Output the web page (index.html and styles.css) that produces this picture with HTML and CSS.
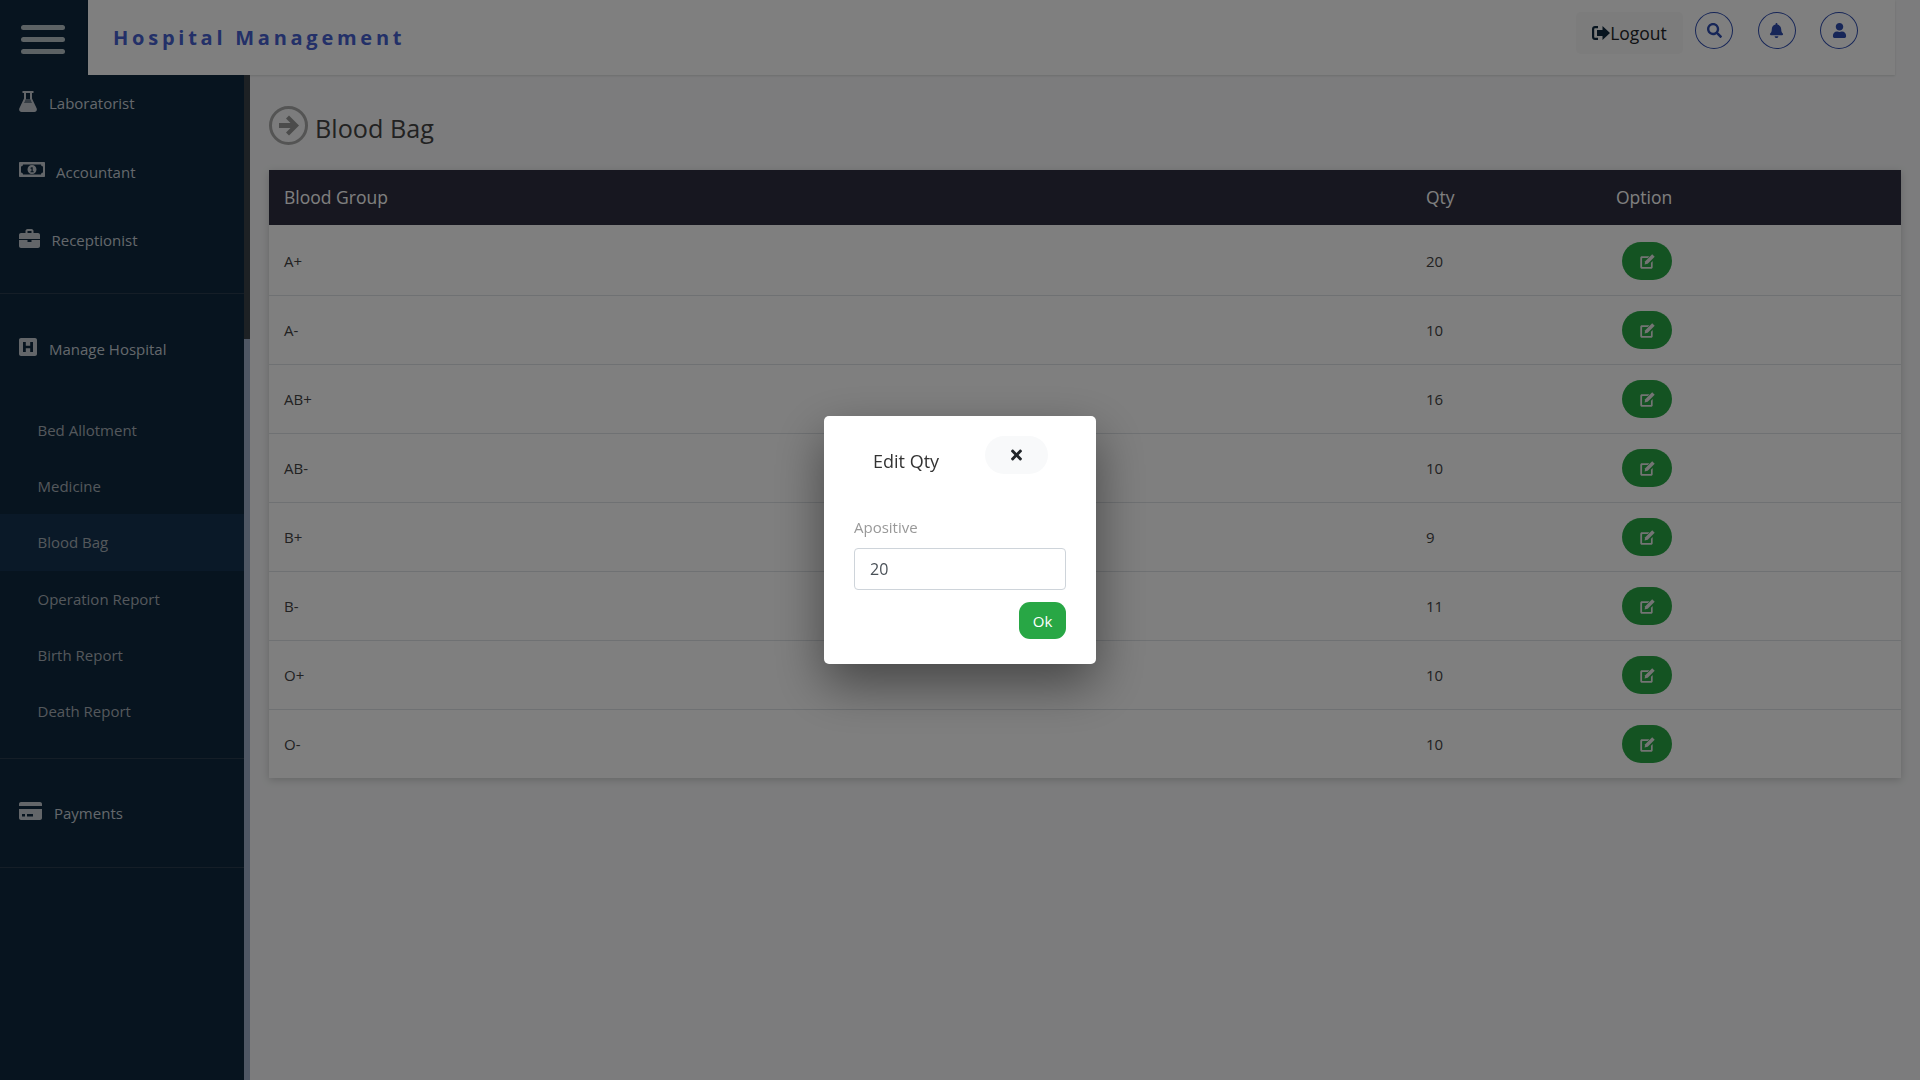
FILE: index.html
```html
<!DOCTYPE html>
<html lang="en">
<head>
    <meta charset="UTF-8">
    <title>Blood Bag</title>
    <link rel="stylesheet" href="styles.css">
</head>
<body>
<div class="topbar">
    <div class="logo-box">
        <span class="burger-line"></span>
        <span class="burger-line"></span>
        <span class="burger-line"></span>
    </div>
    <header class="header">
        <div class="brand">Hospital Management</div>
        <div class="header-tools">
            <button class="logout-btn">
                <svg class="logout-icon" viewBox="0 0 18 14"><path d="M6 0v2.200H3.200c-.6 0-1 .4-1 1v7.600c0 .6.4 1 1 1H6V14H3C1.300 14 0 12.700 0 11V3C0 1.300 1.300 0 3 0z"/><path d="M10.500 0 18 7l-7.500 7V10H5V4h5.500z"/></svg>Logout
            </button>
            <span class="round-btn"><svg class="tool-icon" viewBox="0 0 512 512"><path d="M505 442.700L405.300 343c-4.500-4.500-10.600-7-17-7H372c27.600-35.300 44-79.700 44-128C416 93.100 322.900 0 208 0S0 93.100 0 208s93.100 208 208 208c48.300 0 92.700-16.400 128-44v16.300c0 6.400 2.500 12.500 7 17l99.700 99.700c9.400 9.400 24.600 9.400 33.900 0l28.300-28.300c9.400-9.400 9.400-24.600.1-34zM208 336c-70.700 0-128-57.200-128-128 0-70.700 57.200-128 128-128 70.700 0 128 57.200 128 128 0 70.700-57.200 128-128 128z"/></svg></span>
            <span class="round-btn"><svg class="tool-icon" viewBox="0 0 448 512"><path d="M224 512c35.320 0 63.970-28.650 63.970-64H160.030c0 35.350 28.650 64 63.970 64zm215.390-149.710c-19.320-20.760-55.470-51.990-55.470-154.290 0-77.700-54.480-139.900-127.940-155.160V32c0-17.670-14.320-32-31.980-32s-31.980 14.330-31.980 32v20.840C118.560 68.100 64.080 130.300 64.080 208c0 102.300-36.150 133.530-55.470 154.290-6 6.450-8.660 14.160-8.610 21.710.11 16.400 12.980 32 32.100 32h383.800c19.120 0 32-15.600 32.100-32 .05-7.550-2.610-15.270-8.610-21.710z"/></svg></span>
            <span class="round-btn"><svg class="tool-icon" viewBox="0 0 448 512"><path d="M224 256c70.700 0 128-57.300 128-128S294.700 0 224 0 96 57.300 96 128s57.300 128 128 128zm89.600 32h-16.700c-22.200 10.200-46.900 16-72.900 16s-50.600-5.800-72.900-16h-16.700C60.200 288 0 348.200 0 422.400V464c0 26.500 21.500 48 48 48h352c26.500 0 48-21.500 48-48v-41.600c0-74.200-60.200-134.400-134.400-134.400z"/></svg></span>
        </div>
    </header>
</div>

<div class="below">
    <aside class="sidebar">
        <nav class="side-nav">
            <a class="side-link first">
                <svg class="side-icon flask" viewBox="0 0 18 21"><path fill-rule="evenodd" d="M3.500 0h11v2H13v5.500l4.600 9.800c.8 1.700-.3 3.700-2.200 3.700H2.600C.7 21-.4 19 .4 17.300L5 7.500V2H3.500zM7 2v6l-1.800 4h7.600L11 8V2z"/><path d="M5.200 12h7.600l-2-4H7z" opacity="0.5"/></svg>
                <span class="side-text">Laboratorist</span>
            </a>
            <a class="side-link second">
                <svg class="side-icon money" viewBox="0 0 26 15"><path fill-rule="evenodd" d="M1 0h24c.6 0 1 .4 1 1v13c0 .6-.4 1-1 1H1c-.6 0-1-.4-1-1V1c0-.6.4-1 1-1zm3 2.500C4 3.600 3.100 4.500 2 4.500v6c1.100 0 2 .9 2 2h18c0-1.100.9-2 2-2v-6c-1.100 0-2-.9-2-2z"/><path fill-rule="evenodd" d="M13 3c2.500 0 4.500 2 4.500 4.500S15.500 12 13 12s-4.500-2-4.500-4.500S10.500 3 13 3zm-1.500 2.800v1h1v2.400h-1v1h3.200v-1h-1V5.300h-1z"/></svg>
                <span class="side-text">Accountant</span>
            </a>
            <a class="side-link">
                <svg class="side-icon case" viewBox="0 0 21 19"><path fill-rule="evenodd" d="M6.500 4V2c0-1 .8-2 2-2h4c1.200 0 2 1 2 2v2H19c1.100 0 2 .9 2 2v4H0V6c0-1.100.9-2 2-2zm2-2v2h4V2z"/><path d="M0 11h8.500v2h4v-2H21v6c0 1.100-.9 2-2 2H2c-1.100 0-2-.9-2-2z"/></svg>
                <span class="side-text">Receptionist</span>
            </a>
            <div class="side-rule rule-one"></div>
            <a class="side-link parent">
                <svg class="side-icon hsquare" viewBox="0 0 18 18"><path fill-rule="evenodd" d="M2 0h14c1.100 0 2 .9 2 2v14c0 1.100-.9 2-2 2H2c-1.100 0-2-.9-2-2V2C0 .9.900 0 2 0zm2 4v10h2.800v-3.800h4.400V14H14V4h-2.800v3.800H6.800V4z"/></svg>
                <span class="side-text">Manage Hospital</span>
            </a>
            <ul class="sub-menu">
                <li class="sub-item">Bed Allotment</li>
                <li class="sub-item">Medicine</li>
                <li class="sub-item active">Blood Bag</li>
                <li class="sub-item">Operation Report</li>
                <li class="sub-item">Birth Report</li>
                <li class="sub-item">Death Report</li>
            </ul>
            <div class="side-rule rule-two"></div>
            <a class="side-link pay">
                <svg class="side-icon card" viewBox="0 0 23 18"><path fill-rule="evenodd" d="M2 0h19c1.100 0 2 .9 2 2v2H0V2C0 .9.900 0 2 0zM0 7h23v9c0 1.100-.9 2-2 2H2c-1.100 0-2-.9-2-2zm3 5v2.500h3V12zm5 0v2.500h6V12z"/></svg>
                <span class="side-text">Payments</span>
            </a>
            <div class="side-rule rule-three"></div>
        </nav>
        <div class="side-scroll">
            <div class="side-thumb"></div>
        </div>
    </aside>

    <main class="content">
        <div class="page-title">
            <svg class="title-icon" viewBox="0 0 39 39"><circle cx="19.500" cy="19.500" r="18" fill="none" stroke="currentColor" stroke-width="3"/><path d="M20 9.500l10 10-10 10-3-3 4.500-4.500H10v-5h11.500L17 12.500z"/></svg>
            <h1>Blood Bag</h1>
        </div>

        <table class="blood-table">
            <thead>
                <tr><th class="col-group">Blood Group</th><th class="col-qty">Qty</th><th>Option</th></tr>
            </thead>
            <tbody id="rows"></tbody>
        </table>
    </main>
</div>

<div class="backdrop">
    <div class="modal-box">
        <div class="modal-head">
            <span class="modal-title">Edit Qty</span>
            <button class="close-btn"><svg class="close-icon" viewBox="0 0 352 512"><path d="M242.720 256l100.070-100.070c12.280-12.280 12.280-32.190 0-44.480l-22.240-22.240c-12.280-12.280-32.190-12.280-44.480 0L176 189.280 75.930 89.210c-12.280-12.280-32.190-12.280-44.480 0L9.210 111.450c-12.280 12.280-12.280 32.190 0 44.480L109.280 256 9.210 356.070c-12.280 12.280-12.280 32.190 0 44.480l22.240 22.240c12.280 12.280 32.200 12.280 44.480 0L176 322.720l100.070 100.070c12.280 12.280 32.200 12.280 44.480 0l22.240-22.240c12.280-12.280 12.280-32.190 0-44.480L242.720 256z"/></svg></button>
        </div>
        <label class="field-label" for="qty">Apositive</label>
        <input class="field-input" id="qty" type="text" value="20">
        <div class="modal-foot"><button class="ok-btn">Ok</button></div>
    </div>
</div>

<script>
    const bloodData=[["A+",20],["A-",10],["AB+",16],["AB-",10],["B+",9],["B-",11],["O+",10],["O-",10]];
    const rowsE1=document.getElementById('rows');
    bloodData.forEach(item=>{
        const tr=document.createElement('tr');
        tr.innerHTML=`<td>${item[0]}</td><td>${item[1]}</td>
        <td><button class="edit-btn"><svg class="edit-icon" viewBox="0 0 16 16"><path d="M2 2.500h8l-1.800 1.800H2.800c-.3 0-.6.300-.6.600v8.300c0 .3.300.6.600.6h8.300c.3 0 .6-.3.6-.6V9.300l1.800-1.800V14c0 1-.8 1.600-1.600 1.600H2c-1 0-1.700-.7-1.700-1.600V4.200C.3 3.200 1 2.500 2 2.500z"/><path d="M13 .3l2.700 2.700-7.500 7.500-3.300.6.600-3.300z"/></svg></button></td>`;
        rowsE1.appendChild(tr);
    });
</script>
</body>
</html>
```
FILE: styles.css
```css
*{
    box-sizing: border-box;
    margin: 0;
    padding: 0;
}
body{
    font-family: "Open Sans", sans-serif;
    background: #f8f9fa;
    color: #444;
    height: 100vh;
    overflow: hidden;
}

/* top bar */
.topbar{
    display: flex;
    height: 75px;
}
.logo-box{
    width: 88px;
    padding: 3px 2px 0 0;
    background: #0e283e;
    display: flex;
    flex-direction: column;
    align-items: center;
    justify-content: center;
    gap: 7px;
}
.burger-line{
    width: 44px;
    height: 5px;
    border-radius: 3px;
    background: #b8c4c8;
}
.header{
    flex: 1;
    margin-right: 25px;
    padding: 0 37px 0 25px;
    background: #fff;
    box-shadow: 0 1px 2px rgba(0,0,0,0.12);
    display: flex;
    justify-content: space-between;
}
.brand{
    font-size: 20px;
    font-weight: 700;
    letter-spacing: 3.75px;
    color: #4660d0;
    line-height: 75px;
}
.header-tools{
    display: flex;
    align-items: flex-start;
    padding-top: 12px;
}
.logout-btn{
    width: 107px;
    height: 42px;
    margin-right: 12px;
    border: none;
    border-radius: 5px;
    background: #f8f8f8;
    font: 17.5px "Open Sans", sans-serif;
    color: #212529;
    display: flex;
    align-items: center;
    justify-content: center;
}
.logout-icon{
    width: 18px;
    height: 14px;
    fill: #0e283e;
}
.round-btn{
    width: 38px;
    height: 37px;
    border: 1px solid #2f4db0;
    border-radius: 50%;
    margin-right: 24.5px;
    display: flex;
    align-items: center;
    justify-content: center;
}
.round-btn:last-child{
    margin-right: 0;
}
.tool-icon{
    height: 15px;
    width: 15px;
    fill: #2f4db0;
}

/* sidebar */
.below{
    display: flex;
    height: calc(100vh - 75px);
}
.sidebar{
    width: 250px;
    display: flex;
    background: #0e283e;
}
.side-nav{
    width: 244px;
    color: #c8d0d8;
    font-size: 15px;
}
.side-link{
    display: flex;
    align-items: center;
    height: 68px;
    padding-left: 19px;
}
.side-link.first{
    height: 56px;
    margin-bottom: 6px;
}
.side-link.second{
    height: 69px;
}
.side-icon{
    fill: #c6cdd3;
    flex: none;
}
.flask{
    width: 18px;
    height: 21px;
    margin-right: 12px;
    margin-top: -4px;
}
.money{
    width: 26px;
    height: 15px;
    margin-right: 11px;
    margin-top: -4px;
}
.case{
    width: 21px;
    height: 19px;
    margin-right: 11.5px;
    margin-top: -4px;
}
.hsquare{
    width: 18px;
    height: 18px;
    margin-right: 12px;
    margin-top: -4px;
}
.card{
    width: 23px;
    height: 18px;
    margin-right: 12px;
    margin-top: -4px;
}
.side-rule{
    height: 1px;
    background: #2a3d4f;
}
.rule-one{
    margin-top: 19px;
}
.parent{
    margin-top: 21px;
}
.sub-menu{
    list-style: none;
    margin-top: 19px;
    color: #a8b0b8;
}
.sub-item{
    height: 56.2px;
    line-height: 56px;
    padding-left: 37.5px;
}
.sub-item.active{
    background: #143350;
}
.rule-two{
    margin-top: 19px;
}
.pay{
    height: 108px;
}
.side-scroll{
    width: 6px;
    background: #3a4248;
    padding-top: 264px;
}
.side-thumb{
    height: 100%;
    background: #9eaec8;
}

/* main part */
.content{
    flex: 1;
    padding: 31px 19px 0;
}
.page-title{
    display: flex;
    align-items: flex-start;
    gap: 7px;
    height: 43px;
    margin-bottom: 21px;
}
.title-icon{
    width: 39px;
    height: 39px;
    fill: #969696;
    color: #a8a8a8;
}
.page-title h1{
    font-size: 25.2px;
    font-weight: 400;
    color: #444;
    line-height: 39px;
    padding-top: 3px;
}
.blood-table{
    width: 100%;
    border-collapse: collapse;
    table-layout: fixed;
    background: #fff;
    box-shadow: 0 2px 8px rgba(0,0,0,0.18);
}
.blood-table th{
    height: 55px;
    padding: 0 0 2px 15px;
    text-align: left;
    font-size: 17.5px;
    font-weight: 400;
    color: #fff;
    background: #2e2e40;
}
.col-group{
    width: 1142px;
}
.col-qty{
    width: 190px;
}
.blood-table td{
    height: 69px;
    padding: 1px 0 0 15px;
    font-size: 15px;
    border-bottom: 1px solid #dee2e6;
}
.blood-table tr:first-child td{
    height: 70px;
    padding-top: 3px;
}
.blood-table tr:last-child td{
    border-bottom: none;
}
.blood-table td:last-child{
    padding-left: 21px;
}
.edit-btn{
    width: 50px;
    height: 38px;
    border: none;
    border-radius: 19px;
    background: #28a745;
    display: flex;
    align-items: center;
    justify-content: center;
}
.edit-icon{
    width: 15px;
    height: 15px;
    fill: #e8e8e8;
}

/* modal */
.backdrop{
    position: fixed;
    top: 0;
    left: 0;
    width: 100%;
    height: 100%;
    background: rgba(0,0,0,0.5);
    display: flex;
    align-items: center;
    justify-content: center;
}
.modal-box{
    width: 272px;
    height: 248px;
    padding: 20px 30px 25px;
    background: #fff;
    border-radius: 5px;
    box-shadow: 0 20px 50px rgba(0,0,0,0.45);
}
.modal-head{
    display: flex;
    align-items: flex-start;
    margin-bottom: 43px;
}
.modal-title{
    width: 131px;
    padding: 13px 0 0 19px;
    font-size: 18px;
    color: #333;
}
.close-btn{
    width: 63px;
    height: 38px;
    border: none;
    border-radius: 19px;
    background: #f8f9fa;
    display: flex;
    align-items: center;
    justify-content: center;
}
.close-icon{
    width: 11px;
    height: 16px;
    fill: #212529;
}
.field-label{
    display: block;
    font-size: 15px;
    color: #999;
    line-height: 20px;
    margin-bottom: 11px;
}
.field-input{
    width: 212px;
    height: 42px;
    padding: 0 15px;
    border: 1px solid #ced4da;
    border-radius: 4px;
    font: 16px "Open Sans", sans-serif;
    color: #495057;
    display: block;
}
.modal-foot{
    display: flex;
    justify-content: flex-end;
    margin-top: 12px;
}
.ok-btn{
    width: 47px;
    height: 37px;
    border: none;
    border-radius: 11px;
    background: #28a745;
    color: #fff;
    font: 15px "Open Sans", sans-serif;
}
```
